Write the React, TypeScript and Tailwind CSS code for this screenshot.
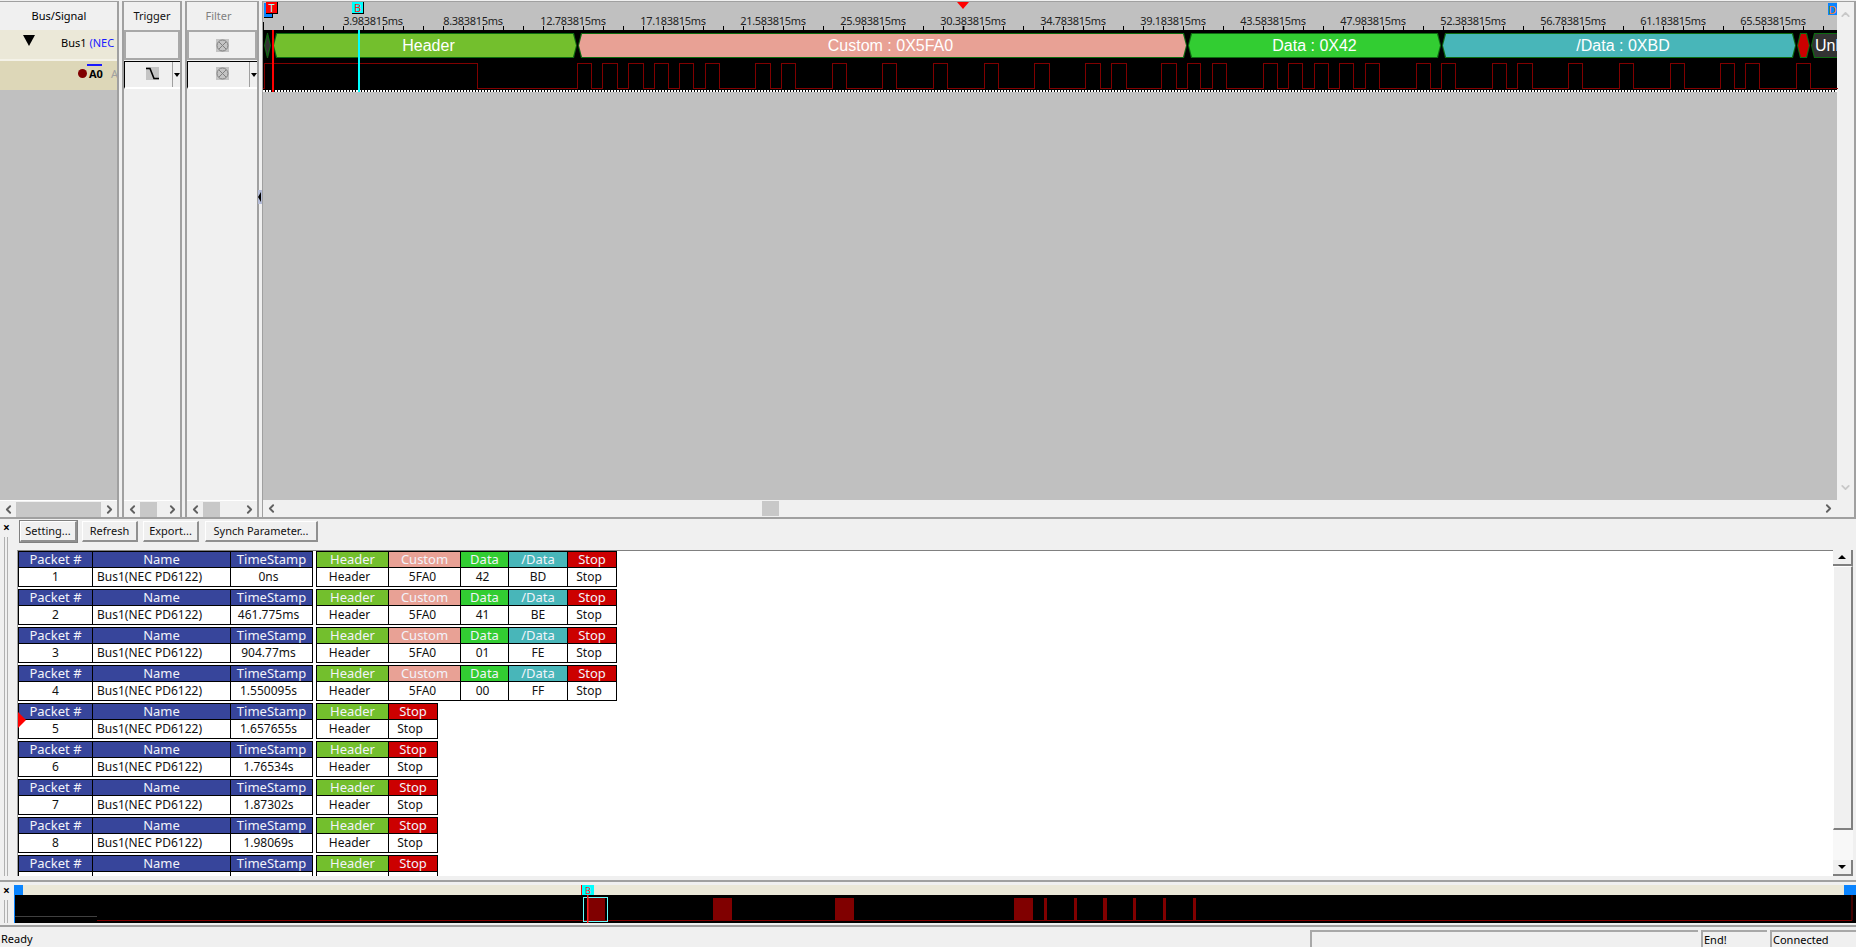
import React from "react";
import { ChevronLeft, ChevronRight, ChevronUp, ChevronDown } from "lucide-react";

const FONT = "[font-family:'Noto_Sans',sans-serif]";

const COL = {
    header: "bg-[#73bf2d]",
    custom: "bg-[#e8a195]",
    data: "bg-[#32cd32]",
    ndata: "bg-[#48b6b9]",
    stop: "bg-[#cc0000]",
    blue: "bg-[#37459b]",
};

// rising/falling edges of the A0 trace, in px from the left of the wave canvas (x=263)
const edges = [
    214, 314, 328.6, 339, 354.5, 365, 380, 391, 405.8, 416.6, 430.8, 442.4, 456.7, 492.4, 507.2, 518.3, 532.6,
    569.2, 583.5, 619.2, 633.5, 670.6, 684.9, 721.5, 735.8, 771.9, 786.2, 822.8, 837.5, 848.3, 863, 898.7, 913.4,
    924.3, 937.7, 949.3, 963, 1000.2, 1014.4, 1025.6, 1039.8, 1051, 1065.7, 1076.5, 1090.7, 1102.3, 1116.1, 1153.2,
    1167.4, 1178.2, 1192, 1229.5, 1243.3, 1254.9, 1269.2, 1305.4, 1319.6, 1356.2, 1370, 1407.1, 1421.3, 1457.5,
    1471.7, 1482.5, 1496.7, 1533.4, 1547.6,
];

const tracePath = () => {
    const HI = 2.5;
    const LO = 27.5;
    let d = `M0 ${LO} L1 ${LO} L1 ${HI}`;
    let high = true;
    edges.forEach((x) => {
        d += ` L${x} ${high ? HI : LO} L${x} ${high ? LO : HI}`;
        high = !high;
    });
    return d + ` L1575 ${high ? HI : LO}`;
};

const rulerLabels = [
    "3.983815ms", "8.383815ms", "12.783815ms", "17.183815ms", "21.583815ms", "25.983815ms", "30.383815ms", "34.783815ms",
    "39.183815ms", "43.583815ms", "47.983815ms", "52.383815ms", "56.783815ms", "61.183815ms", "65.583815ms",
];

const Chev = ({ dir, className = "text-[#606060]" }: { dir: "l" | "r" | "u" | "d"; className?: string }) => {
    const Icon = dir === "l" ? ChevronLeft : dir === "r" ? ChevronRight : dir === "u" ? ChevronUp : ChevronDown;
    return <Icon size={13} strokeWidth={3.4} className={`shrink-0 ${className}`} />;
};

const HScroll = ({ thumbWidth }: { thumbWidth: string }) => (
    <div className="flex h-[17px] shrink-0 items-center border-t border-white bg-[#f0f0f0]">
        <div className="flex w-[16px] shrink-0 justify-center"><Chev dir="l" /></div>
        <div className={`h-[15px] shrink-0 bg-[#c8c8c8] ${thumbWidth}`} />
        <div className="flex-1" />
        <div className="flex w-[16px] shrink-0 justify-center"><Chev dir="r" /></div>
    </div>
);

const CircleX = () => (
    <svg width="13" height="13" viewBox="0 0 13 13">
        <rect width="13" height="13" fill="#c4c4c4" />
        <circle cx="6.5" cy="6.5" r="5.5" fill="none" stroke="#808080" />
        <path d="M3 3 L10 10 M10 3 L3 10" stroke="#808080" />
    </svg>
);

const FallEdge = () => (
    <svg width="13" height="13" viewBox="0 0 13 13">
        <rect width="13" height="13" fill="#c4c4c4" />
        <path d="M0 1.5 H4 L8 11.5 H13" fill="none" stroke="#000" strokeWidth="1.6" />
    </svg>
);

const DropBox = ({ children, width }: { children: React.ReactNode; width: string }) => (
    <div className={`flex h-[28px] border-l border-t border-black border-b-2 border-b-white bg-[#f0f0f0] ${width}`}>
        <div className="flex flex-1 items-center justify-center pb-[2px] pl-[7px]">{children}</div>
        <div className="flex w-[8px] items-center justify-center border-l border-[#a0a0a0]">
            <div className="h-0 w-0 border-x-[3px] border-t-[4px] border-x-transparent border-t-black" />
        </div>
    </div>
);

const segClip = "[clip-path:polygon(3px_0,calc(100%-3px)_0,100%_50%,calc(100%-3px)_100%,3px_100%,0_50%)]";

const Segment = ({ label, width, color, gap, align = "justify-center" }: { label?: string; width: string; color: string; gap: string; align?: string }) => (
    <div className={`h-[25px] shrink-0 bg-[#0d6b10] p-px ${segClip} ${width} ${gap}`}>
        <div className={`flex h-full items-center overflow-hidden whitespace-nowrap text-[16px] leading-none text-white [font-family:'Liberation_Sans',sans-serif] ${align} ${segClip} ${color}`}>
            {label}
        </div>
    </div>
);

type Col = { label: string; value: string; w: string; bg: string; pad?: string };

const Block = ({ cols }: { cols: Col[] }) => (
    <div className="flex h-[36px] shrink-0 border-y border-l border-black">
        {cols.map((c, i) => (
            <div key={i} className={`flex flex-col border-r border-black ${c.w}`}>
                <div className={`flex h-[16px] shrink-0 items-center justify-center border-b border-black text-[13px] text-[#f2f3fa] ${c.bg}`}>{c.label}</div>
                <div className={`flex flex-1 items-center bg-white text-[#111] ${c.pad ?? "justify-center"}`}>{c.value}</div>
            </div>
        ))}
    </div>
);

const packets: { n: string; ts: string; data?: [string, string] }[] = [
    { n: "1", ts: "0ns", data: ["42", "BD"] },
    { n: "2", ts: "461.775ms", data: ["41", "BE"] },
    { n: "3", ts: "904.77ms", data: ["01", "FE"] },
    { n: "4", ts: "1.550095s", data: ["00", "FF"] },
    { n: "5", ts: "1.657655s" },
    { n: "6", ts: "1.76534s" },
    { n: "7", ts: "1.87302s" },
    { n: "8", ts: "1.98069s" },
    { n: "", ts: "" },
];

const PacketRow = ({ n, ts, data }: { n: string; ts: string; data?: [string, string] }) => {
    const left: Col[] = [
        { label: "Packet #", value: n, w: "w-[74px]", bg: COL.blue },
        { label: "Name", value: n ? "Bus1(NEC PD6122)" : "", w: "w-[138px]", bg: COL.blue, pad: "pl-[4px]" },
        { label: "TimeStamp", value: ts, w: "w-[82px]", bg: COL.blue, pad: "justify-center pr-[6px]" },
    ];
    const right: Col[] = data
        ? [
            { label: "Header", value: "Header", w: "w-[72px]", bg: COL.header, pad: "justify-center pr-[6px]" },
            { label: "Custom", value: "5FA0", w: "w-[72px]", bg: COL.custom, pad: "justify-center pr-[4px]" },
            { label: "Data", value: data[0], w: "w-[48px]", bg: COL.data, pad: "justify-center pr-[4px]" },
            { label: "/Data", value: data[1], w: "w-[59px]", bg: COL.ndata },
            { label: "Stop", value: "Stop", w: "w-[49px]", bg: COL.stop, pad: "justify-center pr-[6px]" },
        ]
        : [
            { label: "Header", value: n ? "Header" : "", w: "w-[72px]", bg: COL.header, pad: "justify-center pr-[6px]" },
            { label: "Stop", value: n ? "Stop" : "", w: "w-[49px]", bg: COL.stop, pad: "justify-center pr-[6px]" },
        ];
    return (
        <div className="mb-[2px] flex gap-[3px]">
            <Block cols={left} />
            <Block cols={right} />
        </div>
    );
};

const Btn = ({ label, width, primary }: { label: string; width: string; primary?: boolean }) => (
    <button className={`flex h-[21px] items-center justify-center bg-[#f0f0f0] pb-[2px] text-[#111] border-t border-l border-white border-r-2 border-b-2 border-r-[#909090] border-b-[#909090] ${primary ? "outline outline-[#808080]" : ""} ${width}`}>
        {label}
    </button>
);

const Flag = ({ label, className }: { label: string; className: string }) => (
    <div className={`absolute flex items-center justify-center text-[11px] leading-none ${className}`}>{label}</div>
);

const overviewPulses = [
    [574, 17], [699, 19], [821, 19], [1000, 19], [1030, 3], [1060, 3], [1089, 4], [1119, 3], [1149, 3], [1179, 3],
];

export default function App() {
    return (
        <div className={`flex h-screen w-screen flex-col overflow-hidden bg-[#f0f0f0] text-[11px] leading-none text-black ${FONT}`}>
            {/* top: signal columns and wave */}
            <div className="relative flex h-[519px] shrink-0 gap-[3px] border-b-2 border-[#a0a0a0] pt-px">
                {/* Bus/Signal */}
                <div className="flex w-[119px] shrink-0 flex-col border-r-2 border-t border-[#a0a0a0] bg-[#c0c0c0]">
                    <div className="flex h-[28px] shrink-0 items-center justify-center bg-[#f0f0f0] pb-px pl-[1px]">Bus/Signal</div>
                    <div className="flex h-[31px] shrink-0 items-center overflow-hidden whitespace-nowrap border-b-2 border-[#f4f2e8] bg-[#ebe8d8] pb-[5px]">
                        <div className="ml-[23px] mr-[26px] h-0 w-0 shrink-0 -translate-y-[2px] border-x-[6px] border-t-[11px] border-x-transparent border-t-black" />
                        <span>Bus1&nbsp;</span>
                        <span className="text-[#1a1aff]">(NEC PD6122)</span>
                    </div>
                    <div className="flex h-[29px] shrink-0 items-center overflow-hidden whitespace-nowrap bg-[#ddd7b8] pb-[5px] pl-[78px]">
                        <div className="mr-[2px] h-[9px] w-[9px] shrink-0 rounded-full bg-[#800000]" />
                        <span className="relative font-bold">
                            A0
                            <span className="absolute -top-[4px] left-[-2px] h-[2px] w-[15px] bg-[#1a1aff]" />
                        </span>
                        <span className="ml-[8px] text-[#a0a0a0]">A0</span>
                    </div>
                    <div className="flex-1" />
                    <HScroll thumbWidth="w-[85px]" />
                </div>

                {/* Trigger */}
                <div className="flex w-[60px] shrink-0 flex-col border-x-2 border-t border-[#a0a0a0]">
                    <div className="flex h-[28px] shrink-0 items-center justify-center pb-px text-[#111]">Trigger</div>
                    <div className="h-[30px] shrink-0 border-2 border-[#a8a8a8]" />
                    <div className="pt-px"><DropBox width="w-[56px]"><FallEdge /></DropBox></div>
                    <div className="flex-1" />
                    <HScroll thumbWidth="w-[17px]" />
                </div>

                {/* Filter */}
                <div className="flex w-[74px] shrink-0 flex-col border-x-2 border-t border-[#a0a0a0]">
                    <div className="flex h-[28px] shrink-0 items-center justify-center pb-px pr-[7px] text-[#808080]">Filter</div>
                    <div className="flex h-[30px] shrink-0 items-center justify-center border-2 border-[#a8a8a8]"><CircleX /></div>
                    <div className="pt-px"><DropBox width="w-[70px]"><CircleX /></DropBox></div>
                    <div className="flex-1" />
                    <HScroll thumbWidth="w-[17px]" />
                </div>

                {/* splitter handle */}
                <div className="absolute left-[258px] top-[190px] flex h-[14px] w-[4px] items-center bg-[#b4bcd8]">
                    <div className="h-0 w-0 border-y-[5px] border-r-[3px] border-y-transparent border-r-black" />
                </div>

                {/* Wave */}
                <div className="flex min-w-0 flex-1 flex-col border-l border-r-2 border-t border-[#a0a0a0]">
                    <div className="flex min-h-0 flex-1">
                        <div className="relative flex min-w-0 flex-1 flex-col bg-[#c0c0c0]">
                            {/* ruler */}
                            <div className="relative h-[28px] shrink-0 overflow-hidden">
                                <div className="flex pl-[60px] pt-[13px] text-[#222]">
                                    {rulerLabels.map((l) => (
                                        <div key={l} className="w-[100px] shrink-0 text-center text-[11px] leading-[11px] tracking-[-0.3px]">{l}</div>
                                    ))}
                                </div>
                                <svg className="absolute left-0 top-0" width="1575" height="28">
                                    <path d={Array.from({ length: 79 }, (_, i) => `M${i * 20 + 0.5} ${i === 0 ? 20 : 24} V28`).join(" ")} stroke="#000" fill="none" />
                                    <path d="M700.5 24 V28" stroke="#000" strokeWidth="2" />
                                </svg>
                            </div>
                            {/* bus decode + trace */}
                            <div className="h-[62px] shrink-0 bg-black">
                                <div className="flex h-[31px] items-center">
                                    <Segment width="w-[7px]" color="bg-[#333333]" gap="ml-[1px] mr-[2px]" />
                                    <Segment label="Header" width="w-[304px]" color={COL.header} gap="mr-[1px]" align="justify-center pl-[7px]" />
                                    <Segment label="Custom : 0X5FA0" width="w-[609px]" color={COL.custom} gap="mr-[1px]" align="justify-center pl-[16px]" />
                                    <Segment label="Data : 0X42" width="w-[253px]" color={COL.data} gap="mr-[1px]" />
                                    <Segment label="/Data : 0XBD" width="w-[354px]" color={COL.ndata} gap="mr-[1px]" align="justify-center pl-[8px]" />
                                    <Segment width="w-[13px]" color={COL.stop} gap="mr-[1px]" />
                                    <div className="min-w-0 flex-1 overflow-hidden">
                                        <Segment label="Unknown" width="w-[80px]" color="bg-[#333333]" gap="" align="justify-start pl-[3px]" />
                                    </div>
                                </div>
                                <svg width="1575" height="29" className="block">
                                    <path d={tracePath()} fill="none" stroke="#800000" shapeRendering="crispEdges" />
                                </svg>
                                <div className="h-[2px] bg-[repeating-linear-gradient(90deg,#ffffff_0_2px,#000000_2px_3px)]" />
                            </div>
                            {/* cursors and flags */}
                            <div className="absolute left-[9px] top-[28px] h-[62px] w-[2px] bg-[#ff0000]" />
                            <div className="absolute left-[95px] top-[28px] h-[62px] w-[2px] bg-[#00ffff]" />
                            <div className="absolute left-[1px] top-[1px] h-[15px] w-[9px] border-r border-b border-black bg-[#0a84ff]" />
                            <Flag label="T" className="left-[3px] top-0 h-[12px] w-[12px] border-b border-r border-black bg-[#ff0000] text-[#a0ffff]" />
                            <Flag label="B" className="left-[89px] top-0 h-[12px] w-[12px] border-b border-r border-black bg-[#00ffff] text-[#ff2020]" />
                            <Flag label="D" className="right-0 top-[1px] h-[12px] w-[9px] bg-[#0a84ff] text-[#ff8020]" />
                            <div className="absolute left-[694px] top-0 h-0 w-0 border-x-[6px] border-t-[7px] border-x-transparent border-t-[#ff0000]" />
                            <div className="flex-1" />
                        </div>
                        <div className="flex w-[17px] shrink-0 flex-col items-center justify-between py-[6px]">
                            <Chev dir="u" className="text-[#c8c8c8]" />
                            <Chev dir="d" className="text-[#c8c8c8]" />
                        </div>
                    </div>
                    <div className="flex h-[17px] shrink-0 items-center">
                        <div className="flex w-[16px] shrink-0 justify-center"><Chev dir="l" /></div>
                        <div className="ml-[483px] h-[15px] w-[17px] shrink-0 bg-[#c8c8c8]" />
                        <div className="flex-1" />
                        <div className="mr-[18px] flex w-[16px] shrink-0 justify-center"><Chev dir="r" /></div>
                    </div>
                </div>
            </div>

            {/* packet list */}
            <div className="flex h-[357px] shrink-0">
                <div className="flex w-[17px] shrink-0 flex-col items-start">
                    <div className="w-[13px] pt-[3px] text-center text-[12px] font-bold leading-none">×</div>
                    <div className="ml-[4px] mt-[3px] w-[4px] flex-1 border-x border-[#b0b0b0]" />
                </div>
                <div className="flex min-w-0 flex-1 flex-col">
                    <div className="flex h-[31px] shrink-0 gap-[5px] pl-[3px] pt-[2px]">
                        <Btn label="Setting..." width="w-[57px]" primary />
                        <Btn label="Refresh" width="w-[56px]" />
                        <Btn label="Export..." width="w-[56px]" />
                        <Btn label="Synch Parameter..." width="ml-[1px] w-[113px]" />
                    </div>
                    <div className="flex min-h-0 flex-1">
                        <div className="relative min-w-0 flex-1 overflow-hidden border-l border-t border-l-[#a0a0a0] border-t-[#808080] bg-white text-[12px]">
                            {packets.map((p, i) => (
                                <PacketRow key={i} {...p} />
                            ))}
                            <div className="absolute left-0 top-[161px] h-[16px] w-[8px] bg-[#ff0000] [clip-path:polygon(0_0,100%_50%,0_100%)]" />
                        </div>
                        <div className="mr-[3px] flex w-[20px] shrink-0 flex-col">
                            <div className="flex h-[16px] shrink-0 items-center justify-center border-r-2 border-b-2 border-[#808080] bg-[#f0f0f0]">
                                <div className="h-0 w-0 border-x-[4px] border-b-[4px] border-x-transparent border-b-black" />
                            </div>
                            <div className="h-[264px] shrink-0 border-r-2 border-b-2 border-l border-t border-[#808080] border-l-white border-t-white bg-[#f0f0f0]" />
                            <div className="flex-1 bg-[#f8f8f8]" />
                            <div className="flex h-[16px] shrink-0 items-center justify-center border-r-2 border-b-2 border-[#808080] bg-[#f0f0f0]">
                                <div className="h-0 w-0 border-x-[4px] border-t-[4px] border-x-transparent border-t-black" />
                            </div>
                        </div>
                    </div>
                </div>
            </div>

            {/* overview strip */}
            <div className="mt-[4px] h-[47px] shrink-0 border-y-2 border-t-[#a0a0a0] border-b-[#a0a0a0] pt-[3px]">
                <div className="flex h-[38px]">
                    <div className="flex w-[14px] shrink-0 flex-col items-start">
                        <div className="w-[13px] text-center text-[12px] font-bold leading-[12px]">×</div>
                        <div className="ml-[4px] mt-[3px] w-[4px] flex-1 border-x border-[#b0b0b0]" />
                    </div>
                    <div className="relative flex min-w-0 flex-1 flex-col">
                        <div className="h-[10px] shrink-0 bg-[#ebe8d8]" />
                        <div className="flex-1 border-l border-[#0a84ff] bg-black" />
                        <svg width="1842" height="28" className="absolute left-0 top-[10px]">
                            <path d="M1 21.5 H83" stroke="#404040" />
                            <path d="M83 25.5 H1838 V0" stroke="#800000" fill="none" />
                            {overviewPulses.map(([x, w]) => (
                                <rect key={x} x={x} y={3} width={w} height={22} fill="#800000" />
                            ))}
                            <rect x="569.5" y="2.5" width="24" height="24" fill="none" stroke="#66ffff" />
                            <rect x="573" y="0" width="1.5" height="28" fill="#ff2020" />
                        </svg>
                        <div className="absolute left-0 top-0 h-[10px] w-[9px] bg-[#0a84ff]" />
                        <div className="absolute left-[567px] top-0 flex h-[10px] w-[13px] items-center justify-center border-l border-[#ff0000] bg-[#00ffff] text-[9px] text-[#ff2020]">B</div>
                        <div className="absolute right-0 top-0 h-[10px] w-[12px] bg-[#0a84ff]" />
                    </div>
                </div>
            </div>

            {/* status bar */}
            <div className="flex min-h-0 flex-1 items-stretch gap-[3px] pt-[3px]">
                <div className="flex-1 pl-[1px] pt-[3px]">Ready</div>
                <div className="w-[388px] border-l-2 border-t-2 border-[#a8a8a8]" />
                <div className="w-[66px] border-l-2 border-t-2 border-[#a8a8a8] pl-[1px] pt-[2px]">End!</div>
                <div className="w-[86px] border-l-2 border-t-2 border-[#a8a8a8] pl-[1px] pt-[2px]">Connected</div>
            </div>
        </div>
    );
}
